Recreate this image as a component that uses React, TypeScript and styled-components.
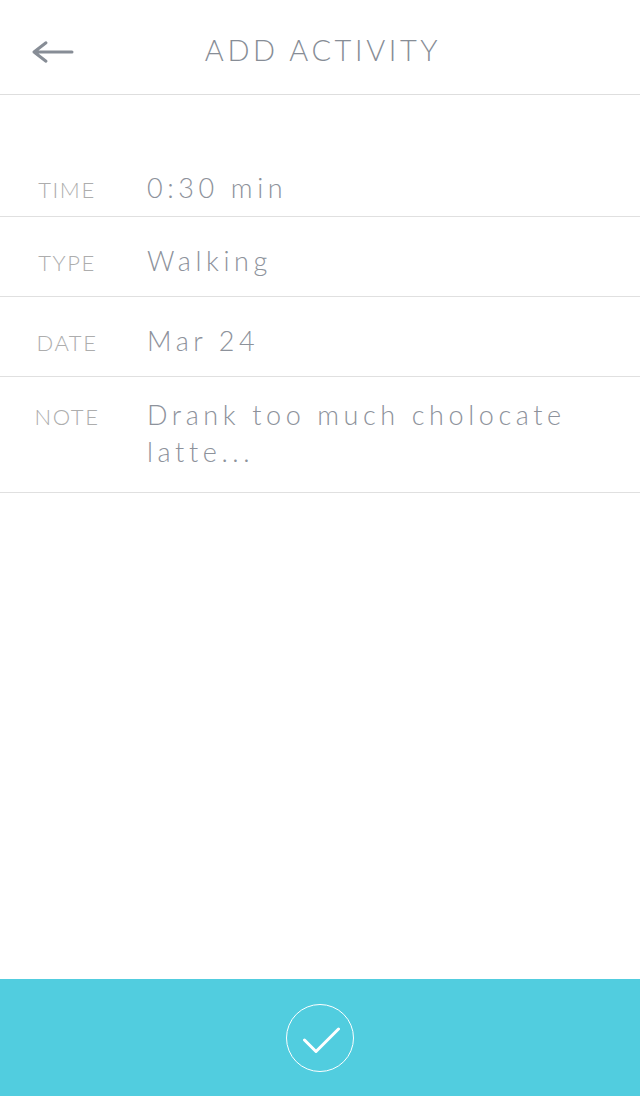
import React from "react";
import styled, { createGlobalStyle } from "styled-components";

const Global = createGlobalStyle`
  html, body { margin: 0; padding: 0; background: #ffffff; }
  body { font-family: Lato, "Open Sans", sans-serif; font-weight: 300; }
  * { box-sizing: border-box; }
`;

const Screen = styled.div`
  display: flex;
  flex-direction: column;
  min-height: 100vh;
  background: #ffffff;
`;

const Header = styled.header`
  position: relative;
  display: flex;
  align-items: center;
  justify-content: center;
  height: 95px;
  padding-top: 4px;
  border-bottom: 1px solid #dedede;
`;

const BackButton = styled.button`
  position: absolute;
  left: 30px;
  top: 34px;
  width: 46px;
  height: 36px;
  padding: 0;
  border: none;
  background: transparent;
  display: flex;
  align-items: center;
  justify-content: center;
  cursor: pointer;
`;

const Title = styled.h1`
  margin: 0;
  font-family: Lato, "Open Sans", sans-serif;
  font-weight: 300;
  font-size: 29px;
  letter-spacing: 3.6px;
  color: #878d96;
  padding-left: 6px;
`;

const Form = styled.div`
  display: flex;
  flex-direction: column;
  padding-top: 42px;
`;

const Row = styled.div`
  display: flex;
  align-items: baseline;
  padding: 25px 0 17px;
  border-bottom: 1px solid #e0e0e0;

  &:first-child {
    padding-top: 32px;
    padding-bottom: 10px;
  }

  &:last-child {
    padding-top: 19px;
    padding-bottom: 22px;
  }
`;

const Label = styled.div`
  width: 134px;
  flex-shrink: 0;
  text-align: center;
  font-size: 22px;
  letter-spacing: 1.6px;
  color: #adadad;
  text-transform: uppercase;
`;

const Value = styled.div`
  margin-left: 13px;
  max-width: 460px;
  font-size: 27px;
  line-height: 37px;
  letter-spacing: 4.6px;
  color: #8d929b;
`;

const Spacer = styled.div`
  flex: 1;
`;

const Footer = styled.footer`
  height: 117px;
  background: #51cddf;
  display: flex;
  align-items: center;
  justify-content: center;
`;

const ConfirmButton = styled.button`
  width: 68px;
  height: 68px;
  padding: 0;
  border: 1.5px solid #ffffff;
  border-radius: 50%;
  background: transparent;
  display: flex;
  align-items: center;
  justify-content: center;
  cursor: pointer;
`;

const fields = [
  { label: "Time", value: "0:30 min" },
  { label: "Type", value: "Walking" },
  { label: "Date", value: "Mar 24" },
  { label: "Note", value: "Drank too much cholocate latte..." },
];

export default function App() {
  return (
    <Screen>
      <Global />
      <Header>
        <BackButton aria-label="Back">
          <svg width="46" height="36" viewBox="0 0 46 36" fill="none">
            <path
              d="M4 18 H42 M4 18 L16 8.8 M4 18 L16 27.2"
              stroke="#878d96"
              strokeWidth="3"
              strokeLinecap="round"
              strokeLinejoin="round"
            />
          </svg>
        </BackButton>
        <Title>ADD ACTIVITY</Title>
      </Header>
      <Form>
        {fields.map((f) => (
          <Row key={f.label}>
            <Label>{f.label}</Label>
            <Value>{f.value}</Value>
          </Row>
        ))}
      </Form>
      <Spacer />
      <Footer>
        <ConfirmButton aria-label="Save">
          <svg width="40" height="40" viewBox="0 0 40 40" fill="none">
            <path
              d="M4.5 22 L16 33.5 L38.5 11"
              stroke="#ffffff"
              strokeWidth="3"
              strokeLinecap="round"
              strokeLinejoin="round"
            />
          </svg>
        </ConfirmButton>
      </Footer>
    </Screen>
  );
}
